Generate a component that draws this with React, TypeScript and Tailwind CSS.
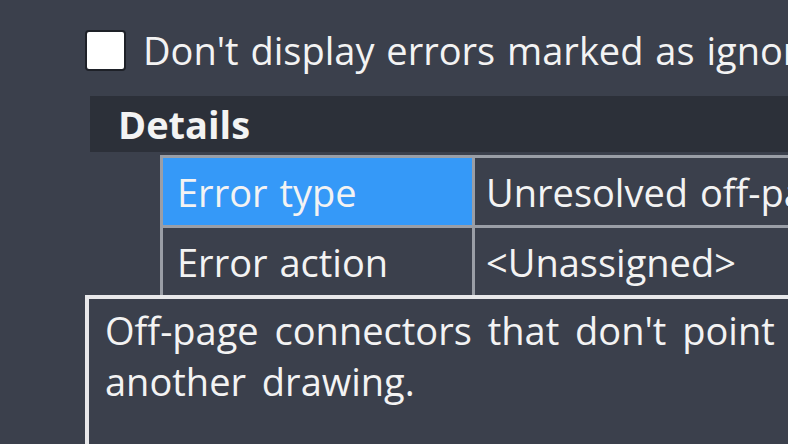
import React from "react";

export default function App() {
  return (
    <div
      className="w-[788px] h-[444px] overflow-hidden bg-[#3b404c] text-[#f3f3f3] text-[38px] leading-[50px] flex flex-col"
      style={{ fontFamily: '"Open Sans", "Noto Sans", sans-serif', wordSpacing: "2px" }}
    >
      {/* checkbox row */}
      <div className="flex items-center pl-[85px] mt-[25px] h-[50px] gap-[17px] whitespace-nowrap">
        <div className="w-[41px] h-[41px] shrink-0 rounded-[4px] border-[2px] border-[#1e2128] bg-white" />
        <span>Don't display errors marked as ignored</span>
      </div>

      {/* details header */}
      <div className="ml-[90px] mt-[21px] h-[56px] w-[800px] shrink-0 bg-[#2c3039] pl-[28px] flex items-center">
        <span className="font-bold">Details</span>
      </div>

      {/* property table */}
      <div className="ml-[160px] mt-[3px] w-[700px] shrink-0 border-t-[3px] border-l-[3px] border-[#9a9ea6] whitespace-nowrap">
        <div className="flex h-[70px] border-b-[3px] border-[#9a9ea6]">
          <div className="w-[309px] shrink-0 bg-[#3599f8] pl-[14px] flex items-center">Error type</div>
          <div className="w-[3px] shrink-0 bg-[#9a9ea6]" />
          <div className="flex-1 pl-[11px] flex items-center">Unresolved off-page connector</div>
        </div>
        <div className="flex h-[67px]">
          <div className="w-[309px] shrink-0 pl-[14px] flex items-center">Error action</div>
          <div className="w-[3px] shrink-0 bg-[#9a9ea6]" />
          <div className="flex-1 pl-[11px] flex items-center">&lt;Unassigned&gt;</div>
        </div>
      </div>

      {/* description box */}
      <div className="ml-[85px] w-[760px] h-[200px] shrink-0 border-[4px] border-[#e8e8ea] pl-[16px] pt-[6px] leading-[51px] whitespace-nowrap [word-spacing:6px]">
        <div>Off-page connectors that don't point to</div>
        <div>another drawing.</div>
      </div>
    </div>
  );
}
